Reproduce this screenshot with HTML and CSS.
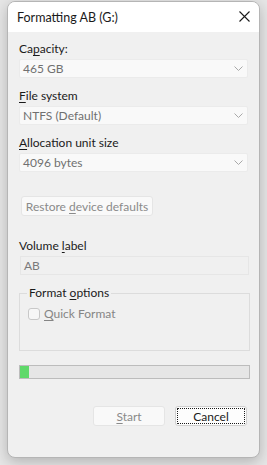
FILE: index.html
```html
<!DOCTYPE html>
<html lang="en">

<head>
    <meta charset="UTF-8">
    <title>Formatting AB (G:)</title>
    <link rel="stylesheet" href="styles.css">
</head>

<body>
    <div class="window">
        <div class="titlebar">
            <span class="title">Formatting AB (G:)</span>
            <svg class="close" width="11" height="11" viewBox="0 0 11 11">
                <path d="M0.5 0.5 L10.5 10.5 M10.5 0.5 L0.5 10.5" stroke="#1a1a1a" stroke-width="1.1" fill="none" />
            </svg>
        </div>
        <div class="content">
            <label class="field-label">Ca<u>p</u>acity:</label>
            <div class="combo">
                <span>465 GB</span>
                <svg class="chevron" width="9" height="6" viewBox="0 0 9 6">
                    <path d="M0.5 0.5 L4.5 4.5 L8.5 0.5" stroke="#a8a8a8" fill="none" />
                </svg>
            </div>

            <label class="field-label"><u>F</u>ile system</label>
            <div class="combo">
                <span>NTFS (Default)</span>
                <svg class="chevron" width="9" height="6" viewBox="0 0 9 6">
                    <path d="M0.5 0.5 L4.5 4.5 L8.5 0.5" stroke="#a8a8a8" fill="none" />
                </svg>
            </div>

            <label class="field-label"><u>A</u>llocation unit size</label>
            <div class="combo">
                <span>4096 bytes</span>
                <svg class="chevron" width="9" height="6" viewBox="0 0 9 6">
                    <path d="M0.5 0.5 L4.5 4.5 L8.5 0.5" stroke="#a8a8a8" fill="none" />
                </svg>
            </div>

            <button class="btn restore" disabled>Restore <u>d</u>evice defaults</button>

            <label class="field-label volume">Volume <u>l</u>abel</label>
            <div class="textbox">AB</div>

            <div class="group">
                <span class="legend">Format <u>o</u>ptions</span>
                <div class="check-row">
                    <span class="checkbox"></span>
                    <span><u>Q</u>uick Format</span>
                </div>
            </div>

            <div class="progress">
                <div class="progress-fill" style="width: 9px"></div>
            </div>

            <div class="actions">
                <button class="btn start" disabled><u>S</u>tart</button>
                <button class="btn cancel">Cancel</button>
            </div>
        </div>
    </div>
</body>
</html>
```

FILE: styles.css
```css
* {
    box-sizing: border-box;
    margin: 0;
    padding: 0;
}

body {
    background-color: #e6e6e6;
    font-family: Lato, "Noto Sans", sans-serif;
    font-size: 12px;
    color: #1a1a1a;
    width: 267px;
    height: 465px;
    overflow: hidden;
}

u {
    text-decoration-thickness: 1px;
    text-underline-offset: 2px;
}

/* Dialog window */
.window {
    margin: 1px 0 0 7px;
    width: 253px;
    height: 457px;
    background-color: #f0f0f0;
    border: 1px solid #b5b5b5;
    border-radius: 8px;
    box-shadow: 0 4px 14px rgba(0, 0, 0, 0.22);
    overflow: hidden;
}

.titlebar {
    height: 30px;
    background-color: #ffffff;
    display: flex;
    align-items: center;
    justify-content: space-between;
    padding: 0 9px 0 9px;
}

.title {
    font-size: 12.5px;
    color: #1a1a1a;
    margin-top: 1px;
}

.close {
    margin-top: -2px;
}

.content {
    padding: 8px 10px 0 11px;
    display: flex;
    flex-direction: column;
}

.field-label {
    height: 18px;
    line-height: 18px;
    margin-bottom: 1px;
    white-space: nowrap;
}

/* Combo boxes */
.combo {
    height: 19px;
    width: 229px;
    background-color: #f9f9f9;
    border: 1px solid #ebebeb;
    border-radius: 2px;
    color: #707070;
    display: flex;
    align-items: center;
    justify-content: space-between;
    padding: 0 4px 0 3px;
    margin-bottom: 9px;
}

.chevron {
    margin-top: 1px;
}

/* Buttons */
.btn {
    font-family: inherit;
    font-size: 12px;
    height: 20px;
    border-radius: 3px;
    border: 1px solid #e5e5e5;
    background-color: #f9f9f9;
    color: #8a8a8a;
    white-space: nowrap;
}

.restore {
    align-self: flex-start;
    width: 132px;
    margin: 15px 0 0 2px;
}

.volume {
    margin-top: 21px;
}

.textbox {
    height: 19px;
    width: 229px;
    border: 1px solid #e6e6e6;
    background-color: #f0f0f0;
    color: #7a7a7a;
    padding-left: 3px;
    line-height: 17px;
    margin-left: 1px;
}

/* Group box */
.group {
    position: relative;
    margin-top: 18px;
    width: 231px;
    height: 58px;
    border: 1px solid #dcdcdc;
    padding: 12px 0 0 8px;
}

.legend {
    position: absolute;
    top: -9px;
    left: 7px;
    padding: 0 2px;
    background-color: #f0f0f0;
    line-height: 16px;
}

.check-row {
    display: flex;
    align-items: center;
    gap: 4px;
    color: #858585;
}

.checkbox {
    width: 12px;
    height: 12px;
    border: 1px solid #c8c8c8;
    border-radius: 3px;
    background-color: #f7f7f7;
}

/* Progress bar */
.progress {
    margin-top: 14px;
    width: 231px;
    height: 14px;
    background-color: #e6e6e6;
    border: 1px solid #bcbcbc;
}

.progress-fill {
    height: 100%;
    background-color: #5fd96a;
}

/* Bottom buttons */
.actions {
    display: flex;
    justify-content: flex-end;
    gap: 10px;
    margin-top: 27px;
    padding-right: 2px;
}

.start {
    width: 72px;
}

.cancel {
    width: 72px;
    color: #1a1a1a;
    background-color: #fdfdfd;
    border: 1px solid #cfcfcf;
    outline: 1px dotted #1a1a1a;
    outline-offset: -3px;
}
```
